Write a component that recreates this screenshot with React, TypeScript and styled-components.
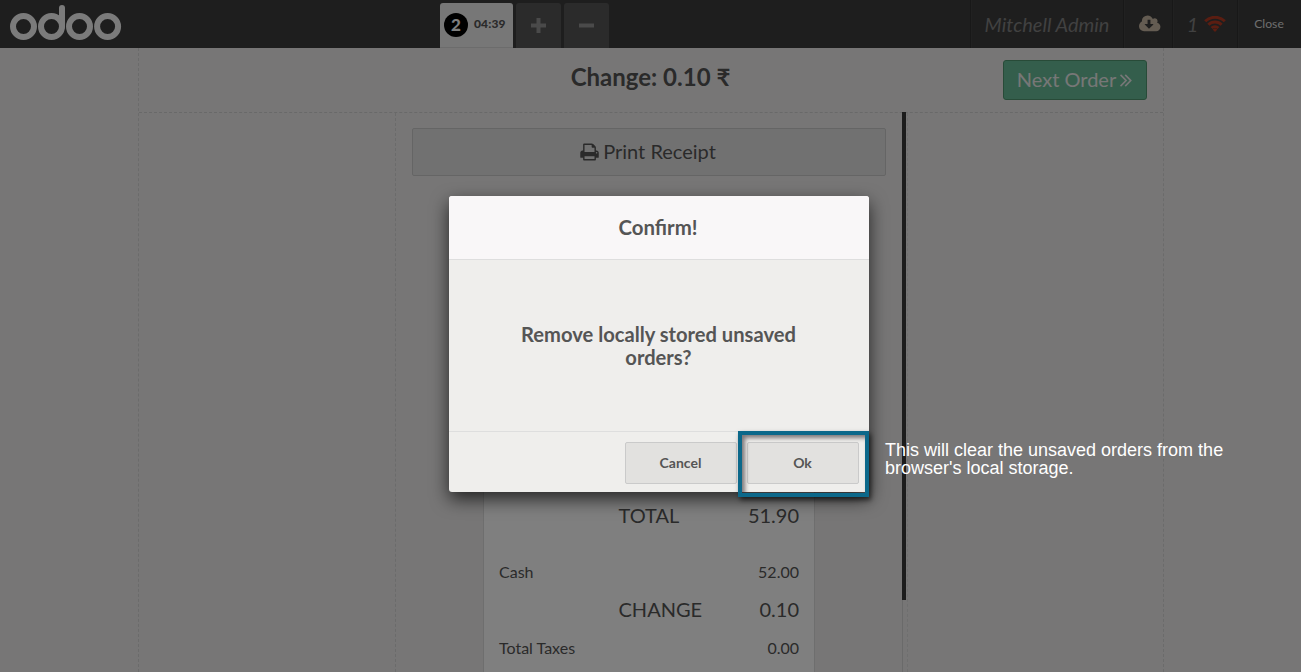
import React from "react";
import styled, { createGlobalStyle } from "styled-components";

const GlobalStyle = createGlobalStyle`
  *, *::before, *::after { box-sizing: border-box; }
  body { margin: 0; overflow: hidden; font-family: Lato, "Liberation Sans", sans-serif; color: #555; }
`;

const Screen = styled.div`
  position: relative;
  display: flex;
  flex-direction: column;
  height: 100vh;
  overflow: hidden;
  background: #eeeded;
`;

const TopBar = styled.header`
  flex: none;
  display: flex;
  justify-content: space-between;
  height: 48px;
  background: #3c3c3c;
`;

const Branding = styled.div`
  width: 440px;
  padding: 4px 0 0 9px;
`;

const OrderTabs = styled.div`
  flex: 1;
  display: flex;
  gap: 3px;
  padding-top: 3px;
`;

const OrderTab = styled.div`
  display: flex;
  align-items: center;
  gap: 6px;
  width: 73px;
  padding: 0 4px 1px;
  border-radius: 3px 3px 0 0;
  border-bottom: 1px solid #d8d8d8;
  background: #eeeeee;
  font-size: 12px;
  font-weight: 900;
  color: #555;
`;

const OrderTime = styled.span`
  padding-bottom: 2px;
  letter-spacing: 0.15px;
`;

const OrderNumber = styled.span`
  display: flex;
  align-items: center;
  justify-content: center;
  width: 24px;
  height: 24px;
  border-radius: 50%;
  background: #000;
  color: #fff;
  font-size: 17px;
  font-weight: 900;
`;

const TabButton = styled.button`
  display: flex;
  align-items: center;
  justify-content: center;
  width: 45px;
  padding: 0 0 1px;
  border: 0;
  border-radius: 3px 3px 0 0;
  background: #575757;
  color: #949494;
`;

const StatusItem = styled.div<{ $width: number }>`
  display: flex;
  align-items: center;
  justify-content: center;
  gap: 6px;
  width: ${(p) => p.$width}px;
  padding-bottom: 1px;
  border-left: 1px solid #303030;
  box-shadow: inset 1px 0 #424242;
  font-size: 20px;
  font-style: italic;
  color: #828282;
`;

const IconItem = styled(StatusItem)`
  padding-left: 3px;
`;

const CloseItem = styled(StatusItem)`
  padding-bottom: 2px;
  padding-right: 1px;
  font-size: 12.2px;
  font-style: normal;
  color: #ddd;
`;

const Status = styled.div`
  display: flex;
`;

const ReceiptScreen = styled.main`
  flex: 1;
  display: flex;
  flex-direction: column;
  width: 1026px;
  min-height: 0;
  margin-left: 138px;
  border: dashed #d6d6d6;
  border-width: 0 1px;
`;

const ScreenHeader = styled.div`
  flex: none;
  display: grid;
  grid-template-columns: 1fr auto 1fr;
  height: 65px;
  padding: 12px 16px 0;
  border-bottom: 1px dashed #d2d2d2;
`;

const ChangeTitle = styled.h1`
  grid-column: 2;
  margin: 2px 1px 0 0;
  font-size: 24px;
  line-height: 30px;
  font-weight: 700;
`;

const NextButton = styled.button`
  justify-self: end;
  display: flex;
  align-items: center;
  justify-content: center;
  gap: 4px;
  width: 144px;
  height: 40px;
  padding: 0 1px 2px 0;
  border: 1px solid #509770;
  border-radius: 3px;
  background: #68bd98;
  color: #eee;
  font: 20px Lato, sans-serif;

  svg {
    margin-top: 2px;
  }
`;

const ScreenBody = styled.div`
  flex: 1;
  display: flex;
  min-height: 0;
  padding-left: 256px;
`;

const ReceiptPane = styled.section`
  display: flex;
  flex-direction: column;
  align-items: center;
  width: 507px;
  padding: 15px 16px 0 16px;
  border-left: 1px dashed #d6d6d6;
`;

const ScrollTrack = styled.div`
  width: 6px;
  border-left: 1px solid #d4d4d4;
  border-right: 1px dashed #dedede;
`;

const ScrollThumb = styled.div`
  width: 4px;
  height: 488px;
  margin: -1px 0 0 -1px;
  background: #393939;
`;

const PrintButton = styled.button`
  flex: none;
  display: flex;
  align-items: center;
  justify-content: center;
  gap: 4px;
  width: 474px;
  height: 48px;
  padding: 0 2px 2px 0;
  border: 1px solid #cacaca;
  border-radius: 2px;
  background: #e3e3e3;
  color: #555;
  font: 20px Lato, sans-serif;

  svg {
    margin-top: 2px;
  }
`;

const Receipt = styled.div`
  flex: none;
  display: flex;
  flex-direction: column;
  width: 332px;
  height: 480px;
  margin-top: 24px;
  padding: 293px 15px 0;
  border: 1px solid #dcdcdc;
  background: #fff;
`;

const Rule = styled.div`
  align-self: flex-end;
  width: 46px;
  border-top: 3px dashed #222;
`;

const ReceiptRow = styled.div<{ $large?: boolean; $height: number }>`
  display: flex;
  justify-content: space-between;
  align-items: center;
  height: ${(p) => p.$height}px;
  padding-left: ${(p) => (p.$large ? 119.5 : 0)}px;
  font-size: ${(p) => (p.$large ? 20 : 16)}px;
`;

const Gap = styled.div`
  height: 20px;
`;

const Backdrop = styled.div`
  position: absolute;
  inset: 0;
  background: rgba(0, 0, 0, 0.5);
`;

const Dialog = styled.div`
  position: absolute;
  left: 449px;
  top: 196px;
  display: flex;
  flex-direction: column;
  width: 420px;
  height: 296px;
  border-radius: 3px;
  overflow: hidden;
  background: #efeeec;
  box-shadow: 0 7px 18px rgba(0, 0, 0, 0.7);
`;

const DialogTitle = styled.div`
  height: 64px;
  padding-right: 2px;
  border-bottom: 1px solid #dedede;
  background: #f9f7f8;
  font-size: 20.4px;
  font-weight: 700;
  line-height: 63px;
  text-align: center;
`;

const DialogMessage = styled.p`
  flex: 1;
  margin: 0;
  padding: 63px 64px 0 63px;
  font-size: 20.15px;
  font-weight: 700;
  line-height: 23px;
  text-align: center;
`;

const DialogFooter = styled.div`
  display: flex;
  justify-content: flex-end;
  gap: 10px;
  height: 61px;
  padding: 10px 10px 0;
  border-top: 1px solid #dedede;
`;

const DialogButton = styled.button`
  width: 112px;
  height: 42px;
  padding: 0 1px 2px 0;
  border: 1px solid #cacaca;
  border-radius: 2px;
  background: #e2e1df;
  color: #555;
  font: 700 14px Lato, sans-serif;
`;

const Highlight = styled.div`
  position: absolute;
  left: 738px;
  top: 431px;
  width: 131px;
  height: 66px;
  border: 4px solid #0c688a;
  box-shadow: 2px 3px 5px rgba(0, 0, 0, 0.6), inset 3px 3px 4px rgba(50, 40, 45, 0.6);
`;

const Note = styled.p`
  position: absolute;
  left: 885px;
  top: 441px;
  width: 350px;
  margin: 0;
  color: #fff;
  font: 18px/18px "Liberation Sans", sans-serif;
`;

const Logo = () => (
  <svg width="114" height="38" viewBox="0 0 114 38" fill="none" stroke="#f6f6f6" strokeWidth="6" strokeLinecap="round">
    <circle cx="14.5" cy="22.5" r="10.5" />
    <circle cx="42.5" cy="22.5" r="10.5" />
    <path d="M53 22.5V4" />
    <circle cx="70.5" cy="22.5" r="10.5" />
    <circle cx="98.6" cy="22.5" r="10.5" />
  </svg>
);

const Plus = () => (
  <svg width="15" height="15" viewBox="0 0 15 15" stroke="currentColor" strokeWidth="4">
    <path d="M0 7.5h15M7.5 0v15" />
  </svg>
);

const Minus = () => (
  <svg width="15" height="15" viewBox="0 0 15 15" stroke="currentColor" strokeWidth="4">
    <path d="M0 7.5h15" />
  </svg>
);

const CloudDownload = () => (
  <svg width="22" height="20" viewBox="-64 0 1971 1792" fill="#c8b8a4">
    <path d="M1216 928q0-14-9-23t-23-9h-224v-352q0-13-9.5-22.5t-22.5-9.5h-192q-13 0-22.5 9.5t-9.5 22.5v352h-224q-13 0-22.5 9.5t-9.5 22.5q0 14 9 23l352 352q9 9 23 9t23-9l351-351q10-12 10-24zm640 224q0 159-112.5 271.5t-271.5 112.5h-1088q-185 0-316.5-131.5t-131.5-316.5q0-130 70-240t188-165q-2-30-2-43 0-212 150-362t362-150q156 0 285.5 87t188.5 231q71-62 166-62 106 0 181 75t75 181q0 76-41 138 130 31 213.5 135.5t83.5 238.5z" />
  </svg>
);

const Wifi = () => (
  <svg width="22" height="16" viewBox="0 0 22 16" fill="none" stroke="#b63b23" strokeWidth="3">
    <path d="M1.2 5.3a14 14 0 0 1 19.6 0M4.4 8.7a9.4 9.4 0 0 1 13.2 0M7.6 12a4.9 4.9 0 0 1 6.8 0" />
    <path d="M11 12.2l2.4 1.3-2.4 2.4-2.4-2.4z" fill="#b63b23" stroke="none" />
  </svg>
);

const DoubleAngle = () => (
  <svg width="12" height="15" viewBox="390 380 990 1160" fill="currentColor">
    <path d="M979 960q0 13-10 23l-466 466q-10 10-23 10t-23-10l-50-50q-10-10-10-23t10-23l393-393-393-393q-10-10-10-23t10-23l50-50q10-10 23-10t23 10l466 466q10 10 10 23zm384 0q0 13-10 23l-466 466q-10 10-23 10t-23-10l-50-50q-10-10-10-23t10-23l393-393-393-393q-10-10-10-23t10-23l50-50q10-10 23-10t23 10l466 466q10 10 10 23z" />
  </svg>
);

const Printer = () => (
  <svg width="19" height="20" viewBox="40 0 1710 1792" fill="currentColor">
    <path d="M448 1536h896v-256h-896v256zm0-640h896v-384h-160q-40 0-68-28t-28-68v-160h-640v640zm1152 64q0-26-19-45t-45-19-45 19-19 45 19 45 45 19 45-19 19-45zm128 0v416q0 13-9.5 22.5t-22.5 9.5h-224v160q0 40-28 68t-68 28h-960q-40 0-68-28t-28-68v-160h-224q-13 0-22.5-9.5t-9.5-22.5v-416q0-79 56.5-135.5t135.5-56.5h64v-544q0-40 28-68t68-28h672q40 0 88 20t76 48l152 152q28 28 48 76t20 88v256h64q79 0 135.5 56.5t56.5 135.5z" />
  </svg>
);

export default function App() {
  return (
    <Screen>
      <GlobalStyle />
      <TopBar>
        <Branding><Logo /></Branding>
        <OrderTabs>
          <OrderTab><OrderNumber>2</OrderNumber><OrderTime>04:39</OrderTime></OrderTab>
          <TabButton aria-label="New order"><Plus /></TabButton>
          <TabButton aria-label="Delete order"><Minus /></TabButton>
        </OrderTabs>
        <Status>
          <StatusItem $width={153}>Mitchell Admin</StatusItem>
          <IconItem $width={49}><CloudDownload /></IconItem>
          <IconItem $width={65}>1<Wifi /></IconItem>
          <CloseItem $width={64}>Close</CloseItem>
        </Status>
      </TopBar>
      <ReceiptScreen>
        <ScreenHeader>
          <ChangeTitle>Change: 0.10 ₹</ChangeTitle>
          <NextButton>Next Order<DoubleAngle /></NextButton>
        </ScreenHeader>
        <ScreenBody>
          <ReceiptPane>
            <PrintButton><Printer />Print Receipt</PrintButton>
            <Receipt>
              <Rule />
              <ReceiptRow $large $height={35}><span>TOTAL</span><span>51.90</span></ReceiptRow>
              <Gap />
              <ReceiptRow $height={38}><span>Cash</span><span>52.00</span></ReceiptRow>
              <ReceiptRow $large $height={38}><span>CHANGE</span><span>0.10</span></ReceiptRow>
              <ReceiptRow $height={38}><span>Total Taxes</span><span>0.00</span></ReceiptRow>
            </Receipt>
          </ReceiptPane>
          <ScrollTrack><ScrollThumb /></ScrollTrack>
        </ScreenBody>
      </ReceiptScreen>
      <Backdrop />
      <Dialog role="dialog">
        <DialogTitle>Confirm!</DialogTitle>
        <DialogMessage>Remove locally stored unsaved orders?</DialogMessage>
        <DialogFooter>
          <DialogButton>Cancel</DialogButton>
          <DialogButton>Ok</DialogButton>
        </DialogFooter>
      </Dialog>
      <Highlight />
      <Note>This will clear the unsaved orders from the browser's local storage.</Note>
    </Screen>
  );
}
